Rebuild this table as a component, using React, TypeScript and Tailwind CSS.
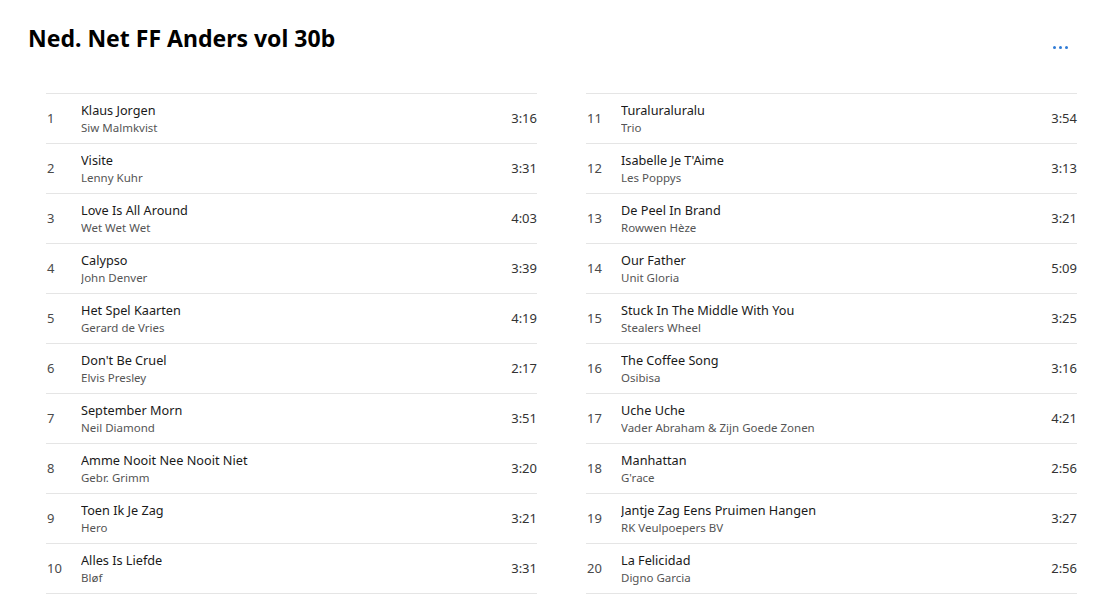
import React from "react";

type Track = { n: number; title: string; artist: string; time: string };

const tracks: Track[] = [
  { n: 1, title: "Klaus Jorgen", artist: "Siw Malmkvist", time: "3:16" },
  { n: 2, title: "Visite", artist: "Lenny Kuhr", time: "3:31" },
  { n: 3, title: "Love Is All Around", artist: "Wet Wet Wet", time: "4:03" },
  { n: 4, title: "Calypso", artist: "John Denver", time: "3:39" },
  { n: 5, title: "Het Spel Kaarten", artist: "Gerard de Vries", time: "4:19" },
  { n: 6, title: "Don't Be Cruel", artist: "Elvis Presley", time: "2:17" },
  { n: 7, title: "September Morn", artist: "Neil Diamond", time: "3:51" },
  { n: 8, title: "Amme Nooit Nee Nooit Niet", artist: "Gebr. Grimm", time: "3:20" },
  { n: 9, title: "Toen Ik Je Zag", artist: "Hero", time: "3:21" },
  { n: 10, title: "Alles Is Liefde", artist: "Bløf", time: "3:31" },
  { n: 11, title: "Turaluraluralu", artist: "Trio", time: "3:54" },
  { n: 12, title: "Isabelle Je T'Aime", artist: "Les Poppys", time: "3:13" },
  { n: 13, title: "De Peel In Brand", artist: "Rowwen Hèze", time: "3:21" },
  { n: 14, title: "Our Father", artist: "Unit Gloria", time: "5:09" },
  { n: 15, title: "Stuck In The Middle With You", artist: "Stealers Wheel", time: "3:25" },
  { n: 16, title: "The Coffee Song", artist: "Osibisa", time: "3:16" },
  { n: 17, title: "Uche Uche", artist: "Vader Abraham & Zijn Goede Zonen", time: "4:21" },
  { n: 18, title: "Manhattan", artist: "G'race", time: "2:56" },
  { n: 19, title: "Jantje Zag Eens Pruimen Hangen", artist: "RK Veulpoepers BV", time: "3:27" },
  { n: 20, title: "La Felicidad", artist: "Digno Garcia", time: "2:56" },
];

function TrackRow({ t }: { t: Track }) {
  return (
    <li className="flex h-[50px] items-center border-b border-[#e5e5e5]">
      <span className="w-[35px] shrink-0 pl-[1px] pt-[1px] text-[13px] text-[#4a4a4a]">{t.n}</span>
      <div className="flex min-w-0 flex-1 flex-col">
        <span className="truncate text-[12.7px] leading-[17px] text-[#1a1a1a]">{t.title}</span>
        <span className="truncate text-[11.5px] leading-[17px] text-[#555]">{t.artist}</span>
      </div>
      <span className="shrink-0 pt-[1px] text-[13px] text-[#333]">{t.time}</span>
    </li>
  );
}

export default function App() {
  const left = tracks.slice(0, 10);
  const right = tracks.slice(10);
  return (
    <div className="h-[598px] w-[1113px] overflow-hidden bg-white" style={{ fontFamily: '"Noto Sans", "Open Sans", sans-serif' }}>
      <header className="flex items-start justify-between pl-[28px] pr-[43px] pt-[22px]">
        <h1 className="text-[23px] font-bold leading-[32px] text-black">Ned. Net FF Anders vol 30b</h1>
        <button className="mt-[22px] flex gap-[3px] p-[2px]" aria-label="More">
          <span className="h-[3px] w-[3px] rounded-full bg-[#2f7bd6]" />
          <span className="h-[3px] w-[3px] rounded-full bg-[#2f7bd6]" />
          <span className="h-[3px] w-[3px] rounded-full bg-[#2f7bd6]" />
        </button>
      </header>
      <div className="mt-[39px] grid grid-cols-2 gap-x-[49px] pl-[46px] pr-[36px]">
        <ul className="border-t border-[#e5e5e5]">
          {left.map((t) => (
            <TrackRow key={t.n} t={t} />
          ))}
        </ul>
        <ul className="border-t border-[#e5e5e5]">
          {right.map((t) => (
            <TrackRow key={t.n} t={t} />
          ))}
        </ul>
      </div>
    </div>
  );
}
